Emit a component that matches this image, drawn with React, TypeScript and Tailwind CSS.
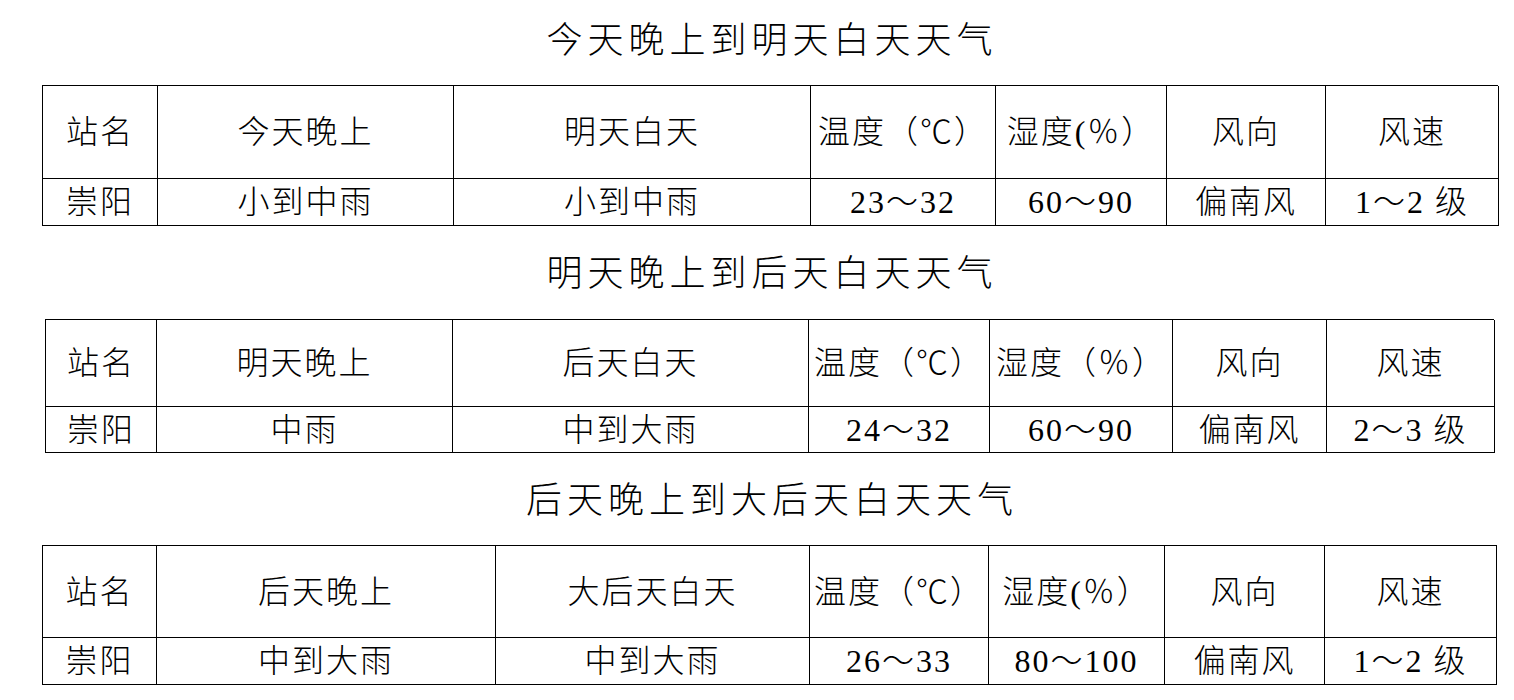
import React from "react";

type Table = {
  title: string;
  titleBox: string;
  tableBox: string;
  cols: string;
  headH: string;
  rowH: string;
  head: string[];
  row: string[];
};

const tables: Table[] = [
  {
    title: "今天晚上到明天白天天气",
    titleBox: "h-[85px] pb-[4px]",
    tableBox: "ml-[42px] w-[1456px]",
    cols: "grid-cols-[115px_296px_357px_185px_171px_159px_173px]",
    headH: "h-[93px]",
    rowH: "h-[47px]",
    head: ["站名", "今天晚上", "明天白天", "温度（℃）", "湿度(％）", "风向", "风速"],
    row: ["崇阳", "小到中雨", "小到中雨", "23～32", "60～90", "偏南风", "1～2 级"],
  },
  {
    title: "明天晚上到后天白天天气",
    titleBox: "h-[93px] pt-[2px]",
    tableBox: "ml-[45px] w-[1449px]",
    cols: "grid-cols-[111px_296px_356px_181px_183px_154px_168px]",
    headH: "h-[87px]",
    rowH: "h-[46px]",
    head: ["站名", "明天晚上", "后天白天", "温度（℃）", "湿度（％）", "风向", "风速"],
    row: ["崇阳", "中雨", "中到大雨", "24～32", "60～90", "偏南风", "2～3 级"],
  },
  {
    title: "后天晚上到大后天白天天气",
    titleBox: "h-[92px] pt-[3px]",
    tableBox: "ml-[42px] w-[1455px]",
    cols: "grid-cols-[114px_339px_314px_179px_176px_160px_172px]",
    headH: "h-[92px]",
    rowH: "h-[47px]",
    head: ["站名", "后天晚上", "大后天白天", "温度（℃）", "湿度(％）", "风向", "风速"],
    row: ["崇阳", "中到大雨", "中到大雨", "26～33", "80～100", "偏南风", "1～2 级"],
  },
];

const font = "font-['Liberation_Serif','Noto_Sans_CJK_SC',serif]";

export default function App() {
  return (
    <div className={`w-[1514px] h-[700px] bg-white text-black overflow-hidden ${font}`}>
      {tables.map((t, ti) => (
        <section key={ti}>
          {/* Title */}
          <div className={`flex items-center justify-center pl-[30px] ${t.titleBox}`}>
            <h2 className="text-[36px] leading-none font-light tracking-[5px]">{t.title}</h2>
          </div>

          {/* Table */}
          <div className={`grid ${t.cols} ${t.tableBox} border-t border-l border-black`}>
            {t.head.map((h, i) => (
              <div
                key={"h" + i}
                className={`${t.headH} flex items-center justify-center border-r border-b border-black text-[32px] font-light tracking-[2px] whitespace-nowrap`}
              >
                {h}
              </div>
            ))}
            {t.row.map((c, i) => (
              <div
                key={"r" + i}
                className={`${t.rowH} flex items-center justify-center border-r border-b border-black text-[32px] font-light tracking-[2px] whitespace-nowrap`}
              >
                {c}
              </div>
            ))}
          </div>
        </section>
      ))}
    </div>
  );
}
